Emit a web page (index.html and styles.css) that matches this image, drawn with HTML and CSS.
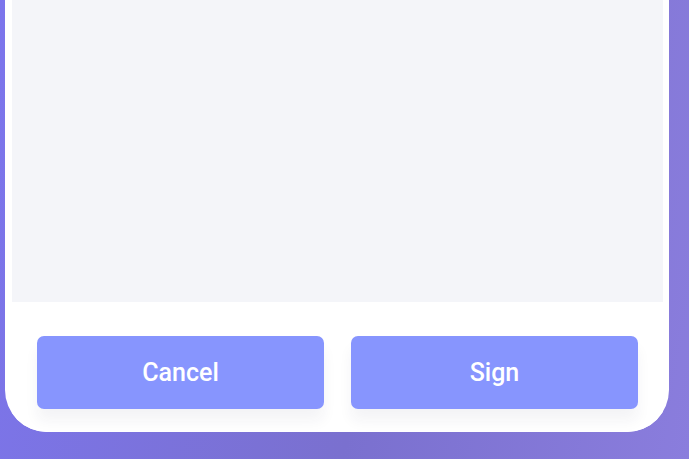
FILE: index.html
```html
<!DOCTYPE html>
<html lang="en">
<head>
<meta charset="utf-8">
<title>Sign request</title>
<link rel="stylesheet" href="styles.css">
</head>
<body>
	<div class="screen">
		<div class="sheet">
			<div class="sheet_body"></div>
			<div class="sheet_footer">
				<button class="btn" type="button">Cancel</button>
				<button class="btn" type="button">Sign</button>
			</div>
		</div>
	</div>
</body>
</html>
```

FILE: styles.css
```css
html, body {
	margin: 0;
	padding: 0;
	height: 100%;
}
body {
	background: linear-gradient(100deg, #7c75ec 0%, #7a70cf 55%, #8a7ddd 100%);
	font-family: Roboto, "Liberation Sans", sans-serif;
	overflow: hidden;
}
.screen {
	height: 459px;
	display: flex;
	flex-direction: column;
	justify-content: flex-end;
	padding: 0 20px 27px 5px;
	box-sizing: border-box;
}
.sheet {
	flex: 1;
	display: flex;
	flex-direction: column;
	background: #fff;
	border-radius: 0 0 42px 42px;
	padding: 0 6px 0 7px;
	overflow: hidden;
}
.sheet_body {
	flex: 1;
	background: #f4f5f9;
}
.sheet_footer {
	height: 130px;
	box-sizing: border-box;
	padding: 34px 25px 0 25px;
	display: flex;
	gap: 27px;
	align-items: flex-start;
	background: #fff;
}
.btn {
	flex: 1;
	height: 73px;
	border: 0;
	border-radius: 7px;
	background: #8795fe;
	box-shadow: 0 12px 14px rgba(40, 40, 70, 0.05);
	color: #fff;
	font-family: Roboto, "Liberation Sans", sans-serif;
	font-size: 25px;
	font-weight: 500;
	padding: 0;
}
```
